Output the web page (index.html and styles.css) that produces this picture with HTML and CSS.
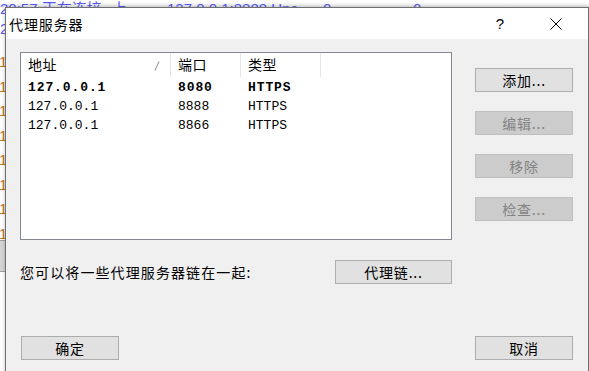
FILE: index.html
```html
<!DOCTYPE html>
<html lang="zh-CN">
<head>
<meta charset="utf-8">
<title>代理服务器</title>
<link rel="stylesheet" href="styles.css">
</head>
<body>
<div class="desktop">
  <div class="bg-window">
    <div class="bg-line bg-top">
      <span class="bg-t1">20:57 正在连接</span><span class="bg-t2">上</span><span class="bg-t3">127.0.0.1:8888 Unc</span><span class="bg-t4">0</span><span class="bg-t5">0</span>
    </div>
    <div class="bg-line bg-second">2</div>
    <div class="bg-col">
      <span>1</span><span>1</span><span>1</span><span>1</span><span>1</span><span>1</span><span>1</span><span>1</span>
    </div>
    <div class="bg-band"></div>
  </div>

  <div class="dialog">
    <div class="titlebar">
      <span class="title">代理服务器</span>
      <span class="help">?</span>
      <span class="close">
        <svg width="12" height="12" viewBox="0 0 12 12"><path d="M0.5 0.5 L11.5 11.5 M11.5 0.5 L0.5 11.5" stroke="#000" stroke-width="1" fill="none"/></svg>
      </span>
    </div>
    <div class="client">
      <div class="top-row">
        <div class="listview">
          <div class="lv-header">
            <div class="hcell c1">地址
              <svg class="sort" width="6" height="10" viewBox="0 0 6 10"><path d="M1 9.5 L5 0.5" stroke="#8a8a8a" stroke-width="1" fill="none"/></svg>
            </div>
            <div class="hcell c2">端口</div>
            <div class="hcell c3">类型</div>
          </div>
          <div class="lv-row bold">
            <div class="cell c1">127.0.0.1</div>
            <div class="cell c2">8080</div>
            <div class="cell c3">HTTPS</div>
          </div>
          <div class="lv-row">
            <div class="cell c1">127.0.0.1</div>
            <div class="cell c2">8888</div>
            <div class="cell c3">HTTPS</div>
          </div>
          <div class="lv-row">
            <div class="cell c1">127.0.0.1</div>
            <div class="cell c2">8866</div>
            <div class="cell c3">HTTPS</div>
          </div>
        </div>
        <div class="side-buttons">
          <button class="btn">添加...</button>
          <button class="btn" disabled>编辑...</button>
          <button class="btn" disabled>移除</button>
          <button class="btn" disabled>检查...</button>
        </div>
      </div>
      <div class="chain-row">
        <span class="chain-label">您可以将一些代理服务器链在一起:</span>
        <button class="btn chain-btn">代理链...</button>
      </div>
      <div class="bottom-row">
        <button class="btn">确定</button>
        <button class="btn">取消</button>
      </div>
    </div>
  </div>
</div>
</body>
</html>
```

FILE: styles.css
```css
html, body {
  margin: 0;
  padding: 0;
}
body {
  width: 589px;
  height: 371px;
  overflow: hidden;
  background: #ffffff;
  font-family: "Noto Sans CJK SC", "Liberation Sans", sans-serif;
}
.desktop {
  position: relative;
  width: 589px;
  height: 371px;
  overflow: hidden;
}
.bg-window {
  position: absolute;
  inset: 0;
  background: linear-gradient(#ffffff 0, #ffffff 2px, #e9e9e9 7px, #ffffff 8px);
}
.bg-line {
  position: absolute;
  white-space: nowrap;
  color: #5858f0;
  font-family: "Liberation Sans", "Noto Sans CJK SC", sans-serif;
  font-size: 15px;
  line-height: 18px;
}
.bg-top {
  left: 0;
  top: 0;
  width: 589px;
  height: 18px;
}
.bg-top span {
  position: absolute;
  top: 0;
}
.bg-t1 { left: 0; }
.bg-t2 { left: 112px; }
.bg-t3 { left: 167px; }
.bg-t4 { left: 323px; }
.bg-t5 { left: 413px; }
.bg-second {
  left: 0;
  top: 20px;
}
.bg-col {
  position: absolute;
  left: -1px;
  top: 50px;
  display: flex;
  flex-direction: column;
  color: #c07010;
  font-family: "Liberation Sans", sans-serif;
  font-size: 15px;
  line-height: 24.5px;
}
.bg-band {
  position: absolute;
  left: 0;
  top: 240px;
  width: 5px;
  height: 30px;
  background: #d6d6d6;
  border-top: 1px solid #a0a0a0;
  border-bottom: 1px solid #a0a0a0;
}

.dialog {
  position: absolute;
  left: 5px;
  top: 7px;
  width: 582px;
  height: 370px;
  border: 1px solid #6f6f6f;
  box-shadow: 0 0 4px rgba(0,0,0,0.25);
  background: #f0f0f0;
  display: flex;
  flex-direction: column;
}
.titlebar {
  height: 31px;
  background: #ffffff;
  display: flex;
  align-items: center;
  flex: none;
}
.title {
  margin-left: 3px;
  font-size: 14px;
  letter-spacing: 0.9px;
  color: #000;
}
.help {
  margin-left: auto;
  font-family: "Liberation Sans", sans-serif;
  font-size: 15px;
  color: #000;
  width: 16px;
  text-align: center;
  margin-right: 42px;
}
.close {
  display: flex;
  margin-right: 26px;
}
.client {
  flex: 1;
  padding: 13px 15px 0 14px;
  display: flex;
  flex-direction: column;
}
.top-row {
  display: flex;
  justify-content: space-between;
}
.listview {
  width: 430px;
  height: 186px;
  border: 1px solid #828790;
  background: #ffffff;
}
.lv-header {
  display: flex;
  height: 24px;
  margin-bottom: 1px;
}
.hcell {
  position: relative;
  font-size: 14px;
  letter-spacing: 0.5px;
  line-height: 22px;
  padding-left: 7px;
  border-right: 1px solid #e5e5e5;
  box-sizing: border-box;
  color: #000;
}
.hcell.c1 { width: 150px; }
.hcell.c2 { width: 70px; }
.hcell.c3 { width: 80px; }
.sort {
  position: absolute;
  right: 10px;
  top: 8px;
}
.lv-row {
  display: flex;
  height: 19px;
  align-items: center;
}
.cell {
  font-family: "Liberation Mono", monospace;
  font-size: 13px;
  color: #000;
  padding-left: 7px;
  box-sizing: border-box;
  white-space: nowrap;
}
.cell.c1 { width: 150px; }
.cell.c2 { width: 70px; }
.cell.c3 { width: 80px; }
.lv-row.bold .cell {
  font-weight: bold;
  letter-spacing: 0.9px;
}
.side-buttons {
  display: flex;
  flex-direction: column;
  gap: 19px;
  padding-top: 16px;
}
.btn {
  width: 98px;
  height: 24px;
  padding: 0;
  background: #e1e1e1;
  border: 1px solid #adadad;
  font-family: "Noto Sans CJK SC", "Liberation Sans", sans-serif;
  font-size: 14px;
  letter-spacing: 0.8px;
  color: #000;
  line-height: 20px;
}
.btn:disabled {
  background: #cccccc;
  border-color: #bfbfbf;
  color: #838383;
}
.chain-row {
  display: flex;
  align-items: center;
  margin-top: 20px;
}
.chain-label {
  font-size: 14px;
  letter-spacing: 1.1px;
  color: #000;
  width: 315px;
}
.chain-btn {
  width: 117px;
}
.bottom-row {
  display: flex;
  justify-content: space-between;
  margin-top: 52px;
  padding-left: 1px;
}
```
